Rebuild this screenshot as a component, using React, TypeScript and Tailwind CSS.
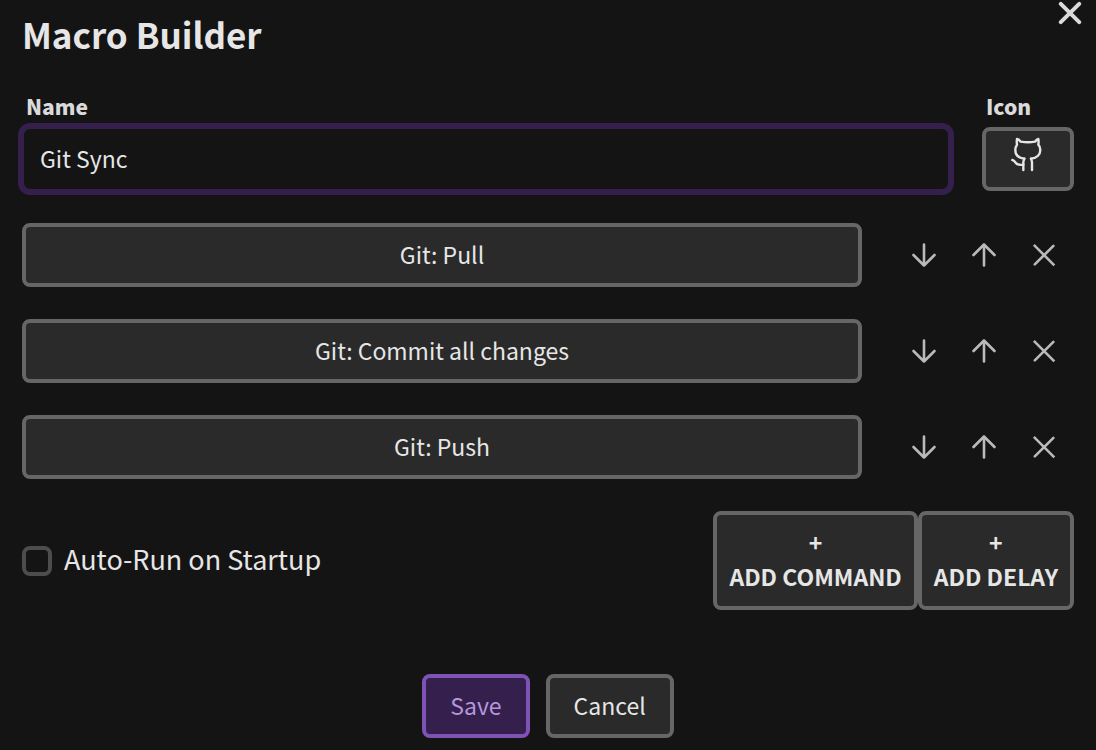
import { useState } from "react";
import type { ReactNode } from "react";

const BUTTON =
  "rounded-lg border-4 border-[#666666] bg-[#2a2a2a] text-[#e6e6e6]";

function ArrowDown() {
  return (
    <svg viewBox="0 0 36 36" className="size-9" fill="none" stroke="currentColor" strokeWidth="2.6" strokeLinecap="round" strokeLinejoin="round" aria-hidden="true">
      <path d="M18 7.5v21M7.5 18 18 28.5 28.5 18" />
    </svg>
  );
}

function ArrowUp() {
  return (
    <svg viewBox="0 0 36 36" className="size-9" fill="none" stroke="currentColor" strokeWidth="2.6" strokeLinecap="round" strokeLinejoin="round" aria-hidden="true">
      <path d="M18 28.5v-21M7.5 18 18 7.5 28.5 18" />
    </svg>
  );
}

function Cross() {
  return (
    <svg viewBox="0 0 36 36" className="size-9" fill="none" stroke="currentColor" strokeWidth="2.6" aria-hidden="true">
      <path d="M8.8 8.8 27.4 27.4" strokeLinecap="square" />
      <path d="M27.4 8.8 8.8 27.4" strokeLinecap="round" />
    </svg>
  );
}

function CloseIcon() {
  return (
    <svg viewBox="0 0 24 24" className="size-6" fill="none" stroke="currentColor" strokeWidth="4" strokeLinecap="round" aria-hidden="true">
      <path d="M2.8 2.8l18.4 18.4M21.2 2.8l-18.4 18.4" />
    </svg>
  );
}

function Octocat() {
  return (
    <svg viewBox="64 22 102 105" className="h-[35px] w-[34px]" fill="none" stroke="currentColor" strokeWidth="7.2" strokeLinecap="round" strokeLinejoin="round" aria-hidden="true">
      <path d="M104 87C87 85 77 75 77 61c0-7 2-12 5-16-1-6-1-11 0-17 4 1 8 4 11 8 14 2 30 2 43 0 3-4 6-7 10-8 1 6 1 11 0 17 4 4 6 9 6 16 0 14-11 24-28 26" />
      <path d="M104 87c-2 4-3 7-3 11v23" />
      <path d="M124 87c2 4 3 7 3 11v23" />
      <path d="M68 91c5 1 7 4 10 8 4 5 12 8 23 6" />
    </svg>
  );
}

function IconButton({ label, children }: { label: string; children: ReactNode }) {
  return (
    <button type="button" aria-label={label} className="flex h-16 w-[60px] items-center justify-center text-[#bababa]">
      {children}
    </button>
  );
}

const COMMANDS = ["Git: Pull", "Git: Commit all changes", "Git: Push"];

export default function App() {
  const [name, setName] = useState("Git Sync");
  const [autoRun, setAutoRun] = useState(false);

  return (
    <main className="relative min-h-screen bg-[#141414] px-[22px] pt-2.5 pb-3 font-['Noto_Sans_CJK_SC',sans-serif] text-[23px] text-[#e6e6e6]">
      <button type="button" aria-label="Close" className="absolute top-px right-[14px] text-[#dadada]">
        <CloseIcon />
      </button>

      <h1 className="text-[35px] leading-[48px] font-bold">Macro Builder</h1>

      <div className="mt-8 flex gap-8">
        <div className="flex-1">
          <label htmlFor="macro-name" className="block px-1 text-[21px] leading-8 font-black text-[#dadada]">
            Name
          </label>
          <input
            id="macro-name"
            type="text"
            value={name}
            onChange={(e) => setName(e.target.value)}
            className="mt-[5px] block h-16 w-full rounded-lg border-2 border-[#351f4d] bg-[#141414] px-4 pb-0.5 leading-8 ring-4 ring-[#351f4d] outline-none"
          />
        </div>
        <div className="w-[92px]">
          <label htmlFor="macro-icon" className="block px-1 text-[21px] leading-8 font-black text-[#dadada]">
            Icon
          </label>
          <button id="macro-icon" type="button" className={`mt-[5px] flex h-16 w-full items-start justify-center pt-1.5 ${BUTTON}`}>
            <Octocat />
          </button>
        </div>
      </div>

      <ul className="mt-8 space-y-8">
        {COMMANDS.map((command) => (
          <li key={command} className="flex items-center">
            <button type="button" className={`mr-8 h-16 flex-1 pb-0.5 leading-8 ${BUTTON}`}>
              {command}
            </button>
            <IconButton label={`Move ${command} down`}>
              <ArrowDown />
            </IconButton>
            <IconButton label={`Move ${command} up`}>
              <ArrowUp />
            </IconButton>
            <IconButton label={`Remove ${command}`}>
              <Cross />
            </IconButton>
          </li>
        ))}
      </ul>

      <div className="mt-8 flex items-center justify-between">
        <label className="flex items-center gap-3 text-[27px] leading-9">
          <input
            type="checkbox"
            checked={autoRun}
            onChange={(e) => setAutoRun(e.target.checked)}
            className="size-[30px] appearance-none rounded-lg border-4 border-[#4d4d4d] checked:bg-[#7f52b5]"
          />
          <span className="pb-1">Auto-Run on Startup</span>
        </label>
        <div className="flex">
          <button type="button" className={`px-3 pt-2.5 pb-[13px] leading-[34px] font-bold ${BUTTON}`}>
            +<br />
            ADD COMMAND
          </button>
          <button type="button" className={`px-3 pt-2.5 pb-[13px] leading-[34px] font-bold ${BUTTON}`}>
            +<br />
            ADD DELAY
          </button>
        </div>
      </div>

      <div className="mt-16 flex justify-center gap-4">
        <button type="button" className="h-16 rounded-lg border-4 border-[#7f52b5] bg-[#351f4d] px-6 pb-0.5 leading-8 text-[#b596d9]">
          Save
        </button>
        <button type="button" className={`h-16 px-6 pb-0.5 leading-8 ${BUTTON}`}>
          Cancel
        </button>
      </div>
    </main>
  );
}
